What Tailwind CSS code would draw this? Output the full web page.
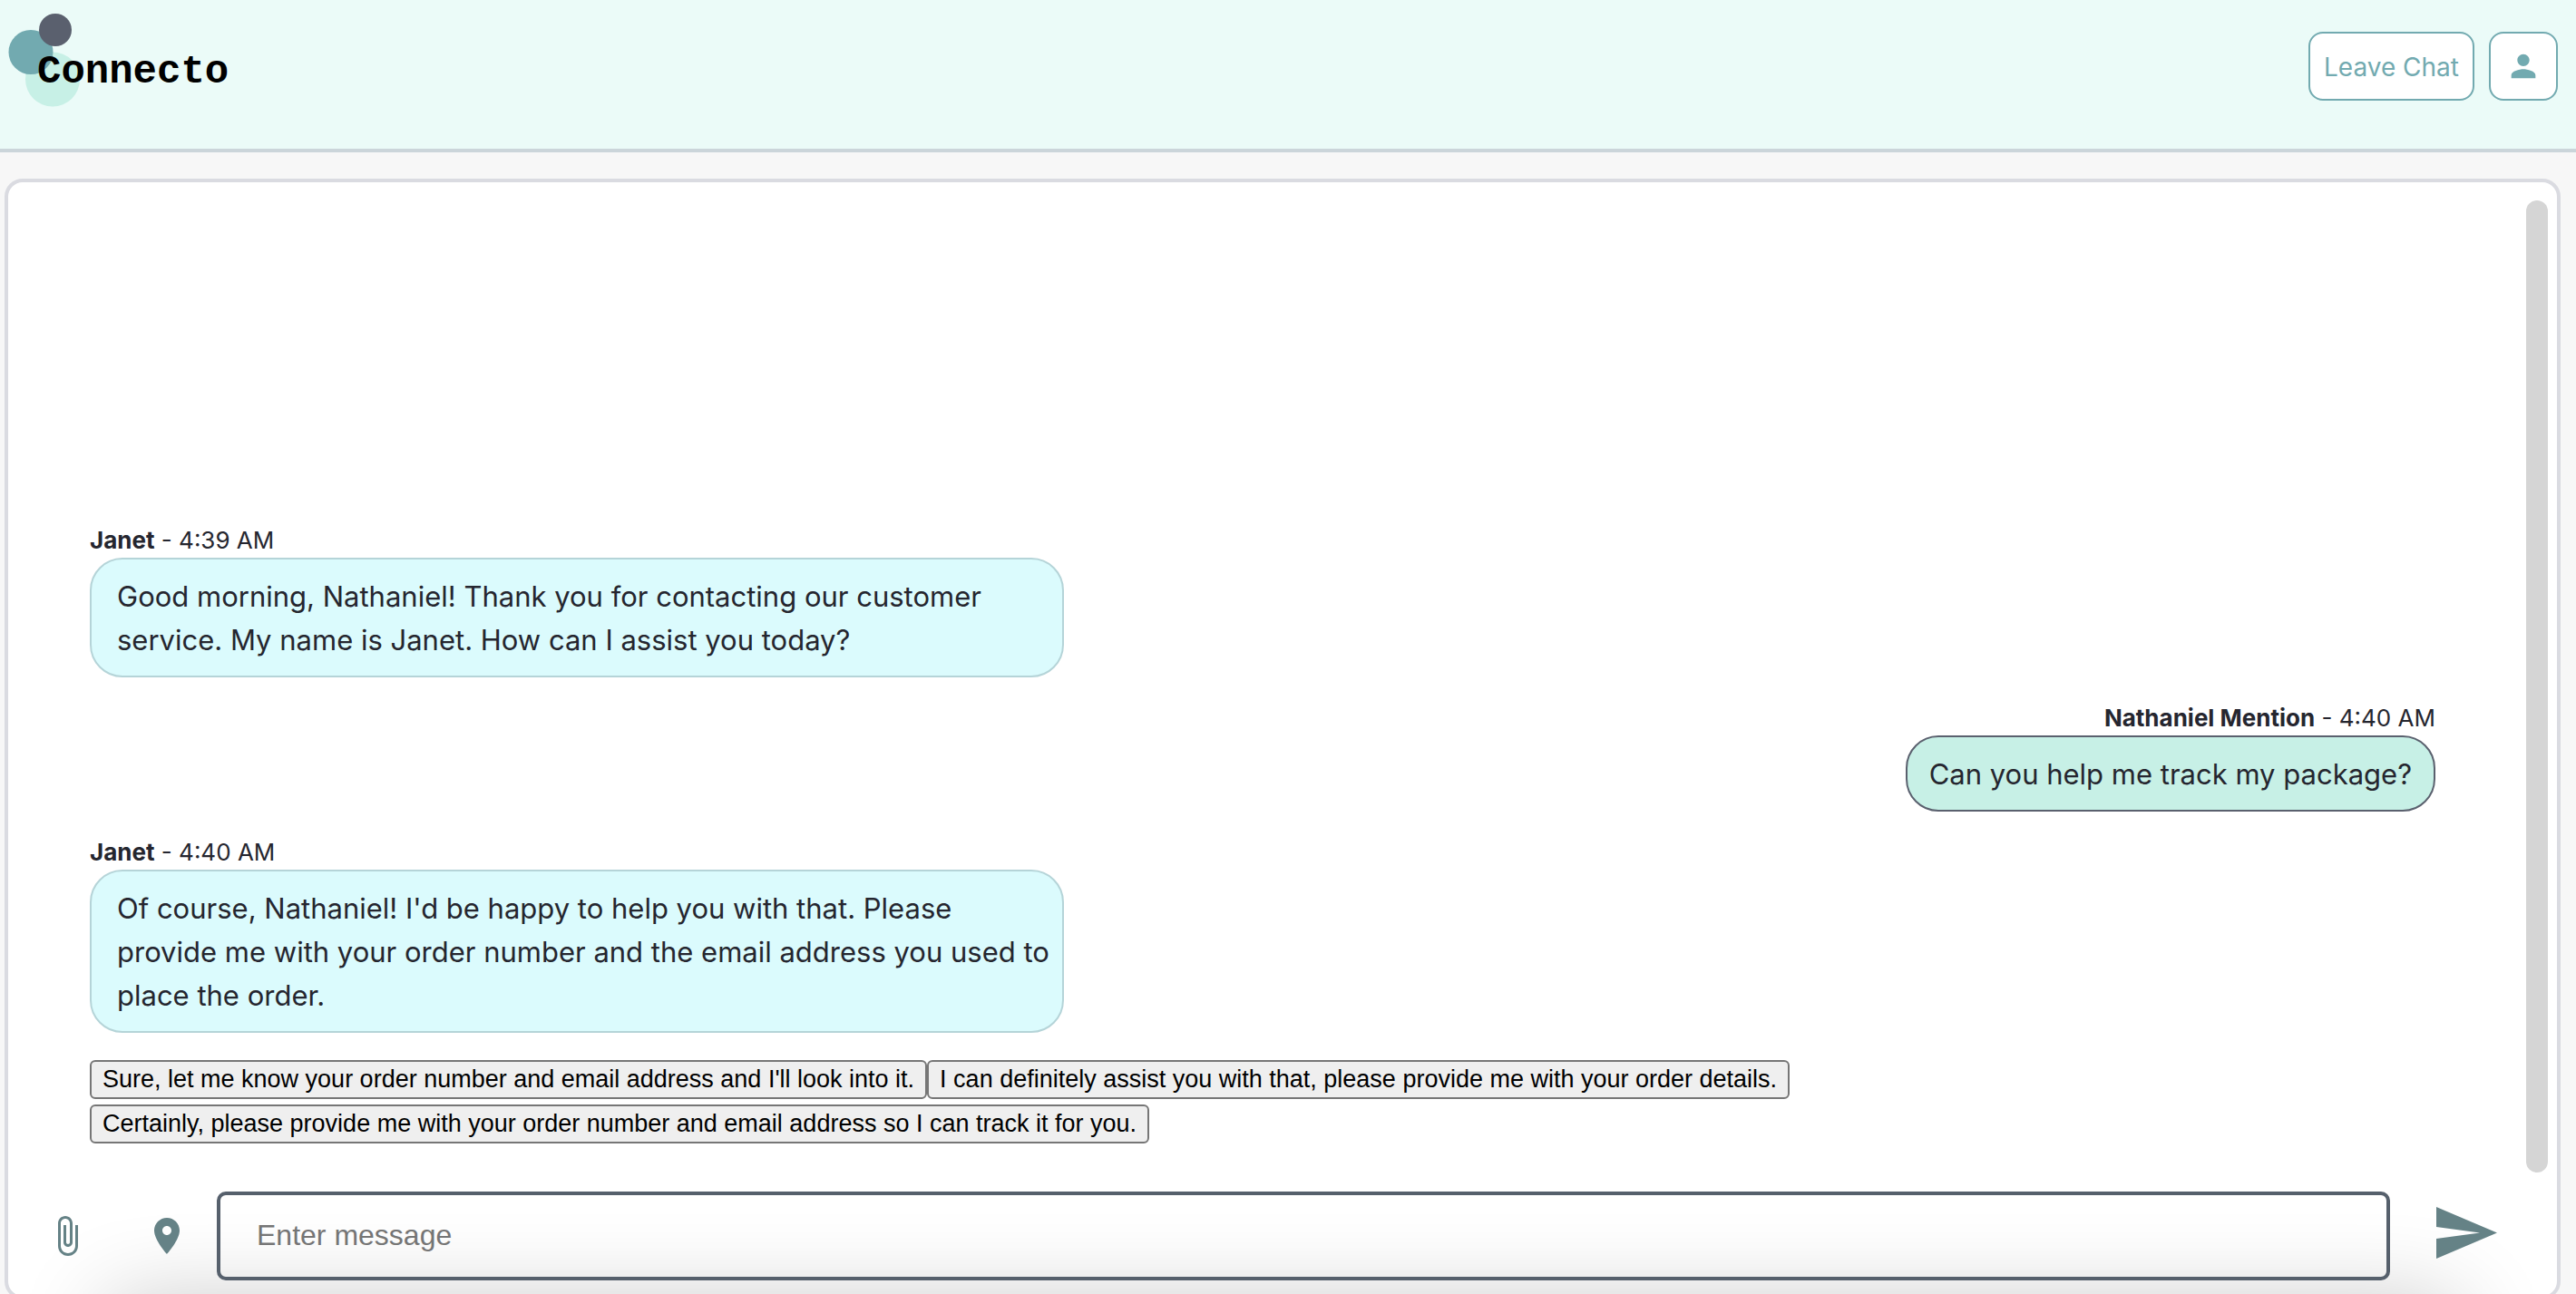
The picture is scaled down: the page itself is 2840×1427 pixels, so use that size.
<!DOCTYPE html>
<html lang="en">
<head>
<meta charset="utf-8">
<meta name="viewport" content="width=device-width, initial-scale=1">
<title>Connecto</title>
<script src="https://cdn.jsdelivr.net/npm/@tailwindcss/browser@4"></script>
</head>
<body class="flex h-screen flex-col overflow-hidden bg-[#f7f7f7] font-[Inter,sans-serif] text-[#25262f]">
  <header class="flex h-[168px] shrink-0 items-start justify-between border-b-4 border-[#cbd5da] bg-[#ebfbf8] pr-5">
    <a href="#" class="relative block h-[120px] w-[260px] text-black">
      <svg class="absolute top-0 left-0 h-[120px] w-[100px]" viewBox="0 0 100 120" aria-hidden="true">
        <circle cx="58" cy="87.500" r="30" fill="#c7f0e6"/>
        <circle cx="34" cy="57.500" r="24.500" fill="#72aab0"/>
        <circle cx="61" cy="33" r="18" fill="#5a606e"/>
      </svg>
      <span class="absolute top-[54px] left-[41px] font-['Liberation_Mono',monospace] text-[44px] leading-[50px] font-bold">Connecto</span>
    </a>
    <nav class="flex gap-4 pt-[35px]">
      <button type="button" class="h-[76px] rounded-2xl border-2 border-[#72aab0] bg-white px-[15px] pt-0.5 text-[28px] text-[#72aab0]">Leave Chat</button>
      <button type="button" aria-label="Profile" class="flex size-[76px] items-center justify-center rounded-2xl border-2 border-[#72aab0] bg-white text-[#72aab0]">
        <svg class="size-10" viewBox="0 0 24 24" fill="currentColor" aria-hidden="true"><path d="M12 12c2.210 0 4-1.790 4-4s-1.790-4-4-4-4 1.790-4 4 1.790 4 4 4zm0 2c-2.670 0-8 1.340-8 4v2h16v-2c0-2.660-5.330-4-8-4z"/></svg>
      </button>
    </nav>
  </header>

  <main class="relative mt-[29px] mr-[17px] -mb-[6px] ml-[5px] flex min-h-0 flex-1 flex-col overflow-hidden rounded-[20px] border-4 border-[#dadbe1] bg-white">
    <div class="pointer-events-none absolute right-[110px] -bottom-[100px] left-[110px] h-[90px] shadow-[0_0_100px_0_rgba(0,0,0,0.24)]"></div>

    <section class="relative mt-5 mr-[10px] flex min-h-0 flex-1 flex-col justify-end pr-[124px] pb-8 pl-[90px]">
      <div class="absolute inset-y-0 right-0 w-6 rounded-full bg-[#d5d5d5]"></div>
      <div class="flex flex-col gap-[25px]">
        <article class="flex flex-col items-start">
          <p class="text-[26px] leading-[39px]"><b class="font-bold">Janet</b> - 4:39 AM</p>
          <p class="w-[1074px] rounded-[36px] border-2 border-[#b5d4d8] bg-[#dbfbfd] pt-[17px] pr-2 pb-[15px] pl-7 text-[31px] leading-[48px]">Good morning, Nathaniel! Thank you for contacting our customer service. My name is Janet. How can I assist you today?</p>
        </article>
        <article class="flex flex-col items-end">
          <p class="text-[26px] leading-[39px]"><b class="font-bold">Nathaniel Mention</b> - 4:40 AM</p>
          <p class="rounded-[36px] border-2 border-[#5a606e] bg-[#c7f0e6] px-6 pt-[17px] pb-[15px] text-[31px] leading-[48px]">Can you help me track my package?</p>
        </article>
        <article class="flex flex-col items-start">
          <p class="text-[26px] leading-[39px]"><b class="font-bold">Janet</b> - 4:40 AM</p>
          <p class="w-[1074px] rounded-[36px] border-2 border-[#b5d4d8] bg-[#dbfbfd] pt-[17px] pr-2 pb-[15px] pl-7 text-[31px] leading-[48px]">Of course, Nathaniel! I'd be happy to help you with that. Please provide me with your order number and the email address you used to place the order.</p>
        </article>
      </div>
      <div class="mt-[30px] flex max-w-[1980px] flex-wrap gap-y-[6px] font-['Liberation_Sans',Arial,sans-serif] text-[27px] leading-[39px] text-black">
        <button type="button" class="rounded-md border-2 border-[#767676] bg-[#efefef] px-3">Sure, let me know your order number and email address and I'll look into it.</button>
        <button type="button" class="rounded-md border-2 border-[#767676] bg-[#efefef] px-3">I can definitely assist you with that, please provide me with your order details.</button>
        <button type="button" class="rounded-md border-2 border-[#767676] bg-[#efefef] px-3">Certainly, please provide me with your order number and email address so I can track it for you.</button>
      </div>
    </section>

    <form class="relative mt-[21px] mb-[17px] flex shrink-0 items-center pr-[66px] pl-[39px] text-[#658286]">
      <button type="button" aria-label="Attach file" class="flex w-[52px] justify-center">
        <svg class="size-12" viewBox="0 0 24 24" fill="currentColor" aria-hidden="true"><path d="M16.500 6v11.500c0 2.210-1.790 4-4 4s-4-1.790-4-4V5c0-1.380 1.120-2.500 2.500-2.500s2.500 1.120 2.500 2.500v10.500c0 .550-.450 1-1 1s-1-.450-1-1V6H10v9.500c0 1.380 1.120 2.500 2.500 2.500s2.500-1.120 2.500-2.500V5c0-2.210-1.790-4-4-4S7 2.790 7 5v12.500c0 3.040 2.460 5.500 5.500 5.500s5.500-2.460 5.500-5.500V6h-1.500z"/></svg>
      </button>
      <button type="button" aria-label="Share location" class="ml-[60px] flex w-12 justify-center">
        <svg class="size-12" viewBox="0 0 24 24" fill="currentColor" aria-hidden="true"><path d="M12 2C8.130 2 5 5.130 5 9c0 5.250 7 13 7 13s7-7.750 7-13c0-3.870-3.130-7-7-7zm0 9.500c-1.380 0-2.500-1.120-2.500-2.500s1.120-2.500 2.500-2.500 2.500 1.120 2.500 2.500-1.120 2.500-2.500 2.500z"/></svg>
      </button>
      <input type="text" aria-label="Message" placeholder="Enter message" class="ml-[31px] h-[98px] min-w-0 flex-1 rounded-[10px] border-4 border-[#56606c] bg-transparent px-10 pb-0.5 font-['Liberation_Sans',Arial,sans-serif] text-[32px] text-[#25262f] placeholder:text-[#757575]">
      <button type="submit" aria-label="Send" class="ml-[51px] flex pb-2">
        <svg class="h-[57px] w-[67px]" viewBox="0 0 67 57" fill="currentColor" aria-hidden="true"><path d="M0 0L67 28.500L0 57V35L48 28.500L0 22Z"/></svg>
      </button>
    </form>
  </main>
</body>
</html>
